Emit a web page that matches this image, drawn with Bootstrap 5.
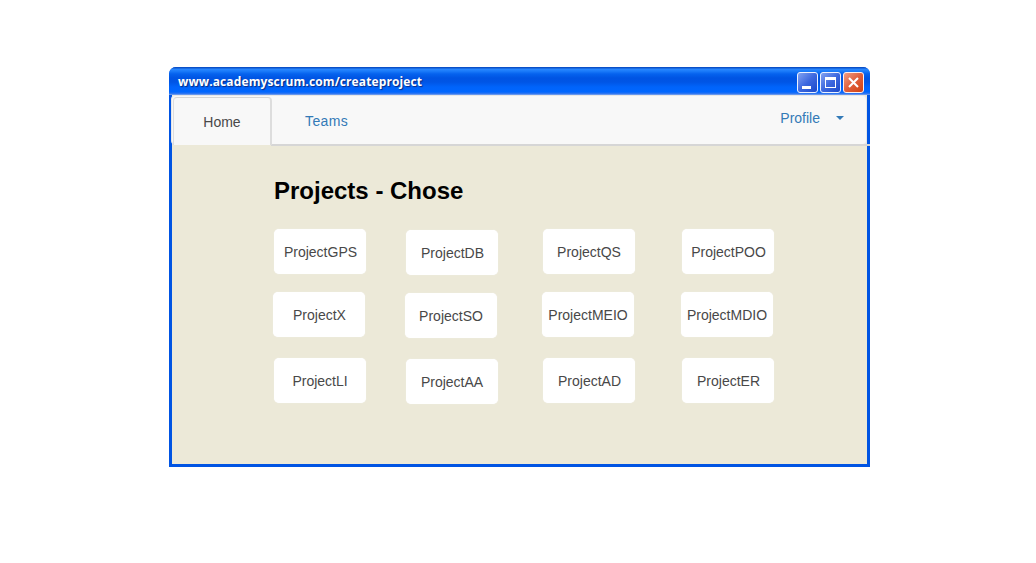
<!DOCTYPE html>
<html lang="en">
<head>
<meta charset="utf-8">
<title>Academy Scrum</title>
<meta name="viewport" content="width=device-width, initial-scale=1">
<link href="https://cdn.jsdelivr.net/npm/bootstrap@5.3.0/dist/css/bootstrap.min.css" rel="stylesheet">
<style>
body { background: #fff; font-family: "Liberation Sans", Arial, sans-serif; font-size: 14px; line-height: 20px; color: #484848; }
.xp-window { width: 701px; height: 400px; margin: 67px 0 0 169px; background: #0054e3; border-radius: 7px 7px 0 0; }
.xp-title { height: 28px; padding: 0 6px 0 9px; border-radius: 7px 7px 0 0;
  background: linear-gradient(#0a50c8 0, #0a50c8 1px, #2a88ff 2px, #1c7cfa 4px, #0562ee 7px, #0054e3 11px, #0055e5 15px, #0064fb 20px, #0066ff 25px, #3a7aee 27px, #8fb2ee 28px); }
.xp-caption { font: bold 12px/30px "Open Sans", "Noto Sans", sans-serif; letter-spacing: .12px; color: #fff; text-shadow: 1px 1px 1px #0a2a80; white-space: nowrap; }
.xp-buttons { gap: 2px; padding-top: 5px; }
.xp-body { height: 369px; margin: 0 3px; background: #ece9d8; }
.app-bar { height: 50px; margin: 0 0 0 -1px; background: #f8f8f8; border: 1px solid #e7e7e7; border-radius: 4px; }
.app-bar .nav-link { padding: 0; }
.app-bar .tab-home { width: 99px; height: 48px; margin-top: 1px; margin-left: 1px; background: #f8f8f8; border: 1px solid #ddd; border-top-color: #d6d6d6; border-right-width: 2px; border-bottom: 0; border-radius: 4px 4px 0 0; color: #484848; text-align: center; line-height: 49px; }
.app-bar .tab-teams { margin-left: 33px; line-height: 51px; color: #337ab7; letter-spacing: .4px; }
.app-bar .menu-profile { color: #337ab7; padding: 12px 22px 0 0; gap: 16px; }
.tab-rule { height: 2px; margin: -1px -3px 0 99px; background: #d6d6d6; }
h1.page-heading { font-size: 24px; line-height: 28px; font-weight: bold; color: #000; margin: 0; padding: 31px 0 0 102px; }
.projects { display: grid; grid-template-columns: 132px 137px 139px 92px; grid-template-rows: 63px 66px 46px; margin: 24px 0 0 102px; }
.project { width: 92px; height: 45px; background: #fff; border-radius: 5px; box-shadow: 0 0 1px 0 #f6f6f6; white-space: nowrap; color: #484848; padding-top: 1px; }
.project:nth-child(4n+2) { margin-top: 1px; }
.project:nth-child(n+5):nth-child(-n+8) { margin-left: -1px; }
.project.nudge { padding-left: 1px; }
</style>
</head>
<body>
<main class="xp-window">
  <header class="xp-title d-flex justify-content-between">
    <div class="xp-caption">www.academyscrum.com/createproject</div>
    <div class="xp-buttons d-flex">
      <svg width="21" height="21" viewBox="0 0 21 21"><defs><linearGradient id="blue" x1="0" y1="0" x2="1" y2="1"><stop offset="0" stop-color="#86a5f2"/><stop offset=".5" stop-color="#3d68df"/><stop offset="1" stop-color="#1948c9"/></linearGradient><linearGradient id="red" x1="0" y1="0" x2="1" y2="1"><stop offset="0" stop-color="#f0a088"/><stop offset=".5" stop-color="#e05f3c"/><stop offset="1" stop-color="#d04010"/></linearGradient></defs><rect x=".5" y=".5" width="20" height="20" rx="2.5" fill="url(#blue)" stroke="#edf2ff"/><path d="M5 14h9v3H5z" fill="#fff"/></svg>
      <svg width="21" height="21" viewBox="0 0 21 21"><rect x=".5" y=".5" width="20" height="20" rx="2.5" fill="url(#blue)" stroke="#edf2ff"/><path d="M5 5h11v11H5zM6 8v7h9V8z" fill="#fff" fill-rule="evenodd"/></svg>
      <svg width="21" height="21" viewBox="0 0 21 21"><rect x=".5" y=".5" width="20" height="20" rx="2.5" fill="url(#red)" stroke="#fff0ee"/><path d="M6 6l9 9M15 6l-9 9" stroke="#fff" stroke-width="2.1"/></svg>
    </div>
  </header>
  <div class="xp-body">
    <nav class="app-bar d-flex justify-content-between">
      <div class="nav">
        <a class="nav-link tab-home" href="#">Home</a>
        <a class="nav-link tab-teams" href="#">Teams</a>
      </div>
      <div class="menu-profile d-flex align-items-start">
        <span>Profile</span>
        <svg class="mt-2" width="8" height="4" viewBox="0 0 8 4"><path d="M0 0h8L4 4z" fill="#337ab7"/></svg>
      </div>
    </nav>
    <div class="tab-rule"></div>
    <h1 class="page-heading">Projects - Chose</h1>
    <section class="projects">
      <div class="project nudge d-flex align-items-center justify-content-center">ProjectGPS</div>
      <div class="project nudge d-flex align-items-center justify-content-center">ProjectDB</div>
      <div class="project d-flex align-items-center justify-content-center">ProjectQS</div>
      <div class="project nudge d-flex align-items-center justify-content-center">ProjectPOO</div>
      <div class="project nudge d-flex align-items-center justify-content-center">ProjectX</div>
      <div class="project d-flex align-items-center justify-content-center">ProjectSO</div>
      <div class="project d-flex align-items-center justify-content-center">ProjectMEIO</div>
      <div class="project d-flex align-items-center justify-content-center">ProjectMDIO</div>
      <div class="project d-flex align-items-center justify-content-center">ProjectLI</div>
      <div class="project d-flex align-items-center justify-content-center">ProjectAA</div>
      <div class="project nudge d-flex align-items-center justify-content-center">ProjectAD</div>
      <div class="project nudge d-flex align-items-center justify-content-center">ProjectER</div>
    </section>
  </div>
</main>
<script src="https://cdn.jsdelivr.net/npm/bootstrap@5.3.0/dist/js/bootstrap.bundle.min.js"></script>
</body>
</html>
